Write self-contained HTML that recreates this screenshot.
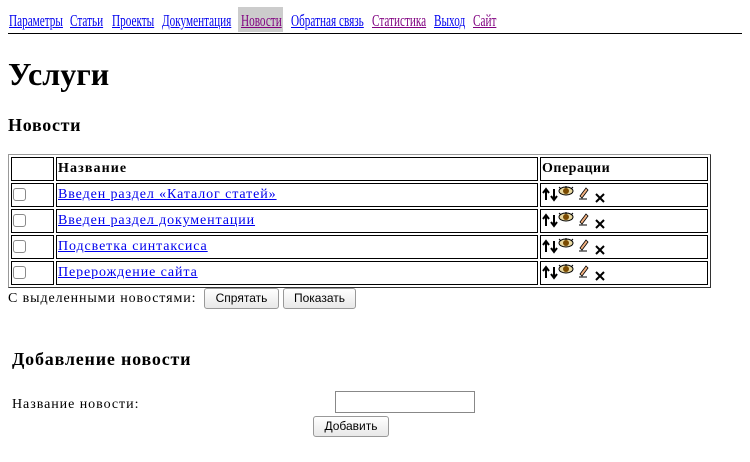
<!DOCTYPE html>
<html><head><meta charset="utf-8"><style>
body{margin:0;width:750px;height:462px;background:#fff;font-family:"Liberation Serif","DejaVu Serif",serif;color:#000;position:relative;overflow:hidden}
.a{position:absolute;white-space:nowrap}
a{color:#0000ee}
a.v{color:#800080}
.nav{font-size:17px;top:11px;transform:scaleX(0.66);transform-origin:0 0}
.c{position:absolute;border:1px solid #000;box-sizing:border-box}
.cb{position:absolute;width:13px;height:13px;border:1px solid #8a8a8a;border-radius:3px;background:#fff;box-sizing:border-box}
.btn{position:absolute;border:1px solid #999;border-radius:3px;background:linear-gradient(#fff,#e8e8e8);font-family:"Liberation Sans",sans-serif;font-size:12px;text-align:center;box-sizing:border-box}
.t{font-size:14px;letter-spacing:0.9px}
.ops{position:absolute}
</style></head><body>
<div class="a" style="left:238px;top:7px;width:45px;height:25px;background:#ccc"></div>
<div class="a nav" style="left:9px"><a href="#">Параметры</a></div>
<div class="a nav" style="left:70px"><a href="#">Статьи</a></div>
<div class="a nav" style="left:112px"><a href="#">Проекты</a></div>
<div class="a nav" style="left:162px"><a href="#">Документация</a></div>
<div class="a nav" style="left:241px"><a class="v" href="#">Новости</a></div>
<div class="a nav" style="left:291px"><a href="#">Обратная связь</a></div>
<div class="a nav" style="left:372px"><a class="v" href="#">Статистика</a></div>
<div class="a nav" style="left:434px"><a href="#">Выход</a></div>
<div class="a nav" style="left:473px"><a class="v" href="#">Сайт</a></div>
<div class="a" style="left:8px;top:33px;width:734px;height:1px;background:#000"></div>

<div class="a" style="left:8px;top:56px;font-size:32px;font-weight:bold">Услуги</div>
<div class="a" style="left:8px;top:115px;font-size:18px;font-weight:bold;letter-spacing:0.7px">Новости</div>

<div class="a" style="left:8px;top:154px;width:703px;height:134px;border:1px solid;border-color:#999 #333 #333 #999;box-sizing:border-box"></div>

<svg width="0" height="0" style="position:absolute"><defs>
<g id="ops">
<path d="M4 14V4M1 7L4 3L7 7" stroke="#000" stroke-width="2" fill="none"/>
<path d="M12 3V13M9 10L12 14L15 10" stroke="#000" stroke-width="2" fill="none"/>
<ellipse cx="24" cy="5" rx="7" ry="4" fill="#e8d8a0" stroke="#000" stroke-width="1"/>
<circle cx="24" cy="5" r="3" fill="#7a4a00"/>
<path d="M17 1l2 2M24 0v2M31 1l-2 2" stroke="#000"/>
<path d="M38 10l6-8 2 2-6 8z" fill="#f0b080" stroke="#000" stroke-width="0.8"/>
<path d="M37 13h8" stroke="#000"/>
<path d="M54 8l8 8M62 8l-8 8" stroke="#000" stroke-width="2"/>
</g></defs></svg>

<div class="c" style="left:11px;top:157px;width:43px;height:24px"></div>
<div class="c" style="left:56px;top:157px;width:482px;height:24px"></div>
<div class="c" style="left:540px;top:157px;width:168px;height:24px"></div>
<div class="a t" style="left:58px;top:161px;font-weight:bold;letter-spacing:1.1px">Название</div>
<div class="a t" style="left:542px;top:161px;font-weight:bold;letter-spacing:0.5px">Операции</div>

<div class="c" style="left:11px;top:183px;width:43px;height:24px"></div>
<div class="c" style="left:56px;top:183px;width:482px;height:24px"></div>
<div class="c" style="left:540px;top:183px;width:168px;height:24px"></div>
<div class="cb" style="left:13px;top:188px"></div>
<div class="a t" style="left:58px;top:187px"><a href="#">Введен раздел «Каталог статей»</a></div>
<svg class="ops" style="left:542px;top:186px" width="66" height="17"><use href="#ops"/></svg>

<div class="c" style="left:11px;top:209px;width:43px;height:24px"></div>
<div class="c" style="left:56px;top:209px;width:482px;height:24px"></div>
<div class="c" style="left:540px;top:209px;width:168px;height:24px"></div>
<div class="cb" style="left:13px;top:214px"></div>
<div class="a t" style="left:58px;top:213px"><a href="#">Введен раздел документации</a></div>
<svg class="ops" style="left:542px;top:212px" width="66" height="17"><use href="#ops"/></svg>

<div class="c" style="left:11px;top:235px;width:43px;height:24px"></div>
<div class="c" style="left:56px;top:235px;width:482px;height:24px"></div>
<div class="c" style="left:540px;top:235px;width:168px;height:24px"></div>
<div class="cb" style="left:13px;top:240px"></div>
<div class="a t" style="left:58px;top:239px"><a href="#">Подсветка синтаксиса</a></div>
<svg class="ops" style="left:542px;top:238px" width="66" height="17"><use href="#ops"/></svg>

<div class="c" style="left:11px;top:261px;width:43px;height:24px"></div>
<div class="c" style="left:56px;top:261px;width:482px;height:24px"></div>
<div class="c" style="left:540px;top:261px;width:168px;height:24px"></div>
<div class="cb" style="left:13px;top:266px"></div>
<div class="a t" style="left:58px;top:265px"><a href="#">Перерождение сайта</a></div>
<svg class="ops" style="left:542px;top:264px" width="66" height="17"><use href="#ops"/></svg>

<div class="a t" style="left:8px;top:291px;letter-spacing:0.9px">С выделенными новостями:</div>
<div class="btn" style="left:204px;top:288px;width:75px;height:21px;line-height:19px">Спрятать</div>
<div class="btn" style="left:283px;top:288px;width:73px;height:21px;line-height:19px">Показать</div>

<div class="a" style="left:12px;top:349px;font-size:18px;font-weight:bold;letter-spacing:0.8px">Добавление новости</div>
<div class="a t" style="left:12px;top:397px;letter-spacing:0.95px">Название новости:</div>
<div class="a" style="left:335px;top:391px;width:140px;height:22px;border:1px solid #888;box-sizing:border-box"></div>
<div class="btn" style="left:313px;top:416px;width:76px;height:21px;line-height:19px">Добавить</div>
</body></html>
